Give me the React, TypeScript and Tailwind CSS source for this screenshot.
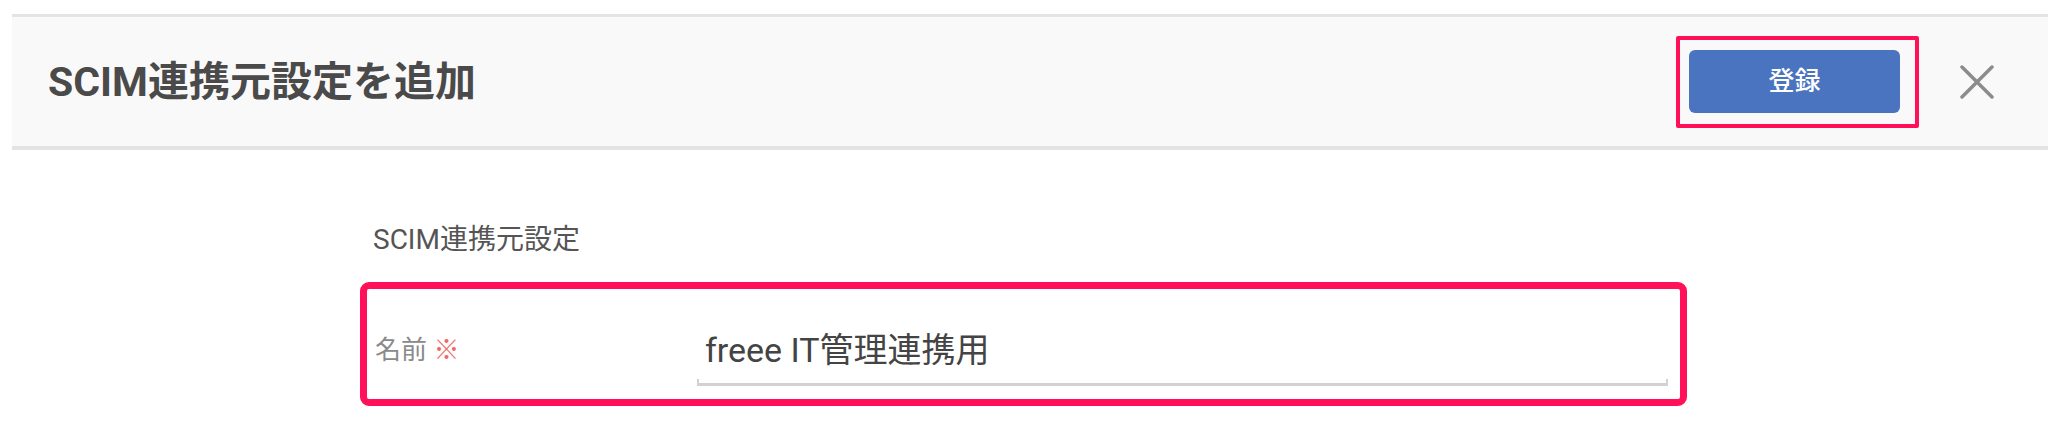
import React from 'react';

const font = { fontFamily: 'Roboto, "Noto Sans CJK JP", sans-serif' };

const CloseIcon = () => (
  <svg width="34" height="34" viewBox="0 0 34 34" fill="none">
    <path d="M2 2 L32 32 M32 2 L2 32" stroke="#8c8c8c" strokeWidth="3.5" strokeLinecap="round" />
  </svg>
);

const App = () => {
  return (
    <div className="w-[2048px] h-[438px] bg-white overflow-hidden" style={font}>
      {/* Header */}
      <div className="ml-[12px] mt-[14px] h-[136px] bg-[#f9f9f9] border-t-[3px] border-b-[4px] border-[#e4e4e4] flex items-center justify-between pl-[36px] pr-[54px]">
        <h1 className="text-[41px] leading-[52px] font-bold text-[#4a4a4a]">SCIM連携元設定を追加</h1>
        <div className="flex items-center gap-[41px]">
          <div className="border-[4px] border-[#ff1058] rounded-[2px] pl-[9px] pr-[15px] pt-[10px] pb-[11px]">
            <button className="w-[211px] h-[63px] rounded-[6px] bg-[#4a74c0] text-white text-[26px] font-medium flex items-center justify-center">
              登録
            </button>
          </div>
          <CloseIcon />
        </div>
      </div>

      {/* Body */}
      <div className="pl-[360px]">
        <div className="ml-[13px] mt-[74px] mb-[26px] text-[28px] leading-[32px] text-[#555555]">SCIM連携元設定</div>
        <div className="w-[1327px] h-[124px] border-[7px] border-[#ff1058] rounded-[9px] flex items-start pl-[8px] pt-[41px]">
          <div className="w-[322px] text-[26px] leading-[40px] text-[#8a8a8a]">
            名前 <span className="text-[#ef6a64]">※</span>
          </div>
          <div className="w-[971px] flex flex-col">
            <div className="pl-[8px] text-[34px] leading-[40px] text-[#444444]">freee IT管理連携用</div>
            <div className="mt-[9px] h-[7px] border-x-2 border-b-[3px] border-[#d2d2d2]" />
          </div>
        </div>
      </div>
    </div>
  );
};

export default App;
